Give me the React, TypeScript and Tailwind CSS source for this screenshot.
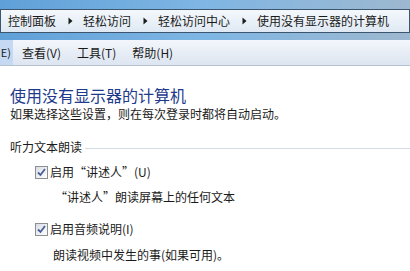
import React from 'react';

const font = { fontFamily: '"Noto Sans CJK SC", "Noto Sans", sans-serif' };

const Arrow = () => (
  <svg width="5" height="8" viewBox="0 0 5 8" className="ml-[12px] mr-[10px] shrink-0">
    <path d="M0.5 0.5 L4.5 4 L0.5 7.5 Z" fill="#1b1b1b" />
  </svg>
);

const Check = () => (
  <span className="w-[13px] h-[13px] border border-[#8e8f8f] bg-gradient-to-br from-[#d8dde6] to-[#ffffff] flex items-center justify-center shrink-0">
    <svg width="9" height="9" viewBox="0 0 9 9">
      <path d="M1 4.5 L3.5 7 L8 1" fill="none" stroke="#4a5f97" strokeWidth="1.8" />
    </svg>
  </span>
);

export default function App() {
  const crumbs = ['控制面板', '轻松访问', '轻松访问中心', '使用没有显示器的计算机'];
  return (
    <div className="w-[410px] h-[271px] overflow-hidden bg-white text-[12px] text-[#1a1a1a]" style={font}>
      {/* title / address */}
      <div className="bg-gradient-to-r from-[#5fa0d8] via-[#7fb6e4] to-[#9db8cf] pt-[9px] pb-[7px]">
        <div className="h-[24px] border border-[#3d5670] bg-gradient-to-b from-[#f4f8fc] to-[#dfe9f3] flex items-center pl-[7px]">
          {crumbs.map((c, i) => (
            <React.Fragment key={c}>
              <span className="leading-none">{c}</span>
              {i < crumbs.length - 1 && <Arrow />}
            </React.Fragment>
          ))}
        </div>
      </div>

      {/* menu bar */}
      <div className="h-[26px] bg-gradient-to-b from-[#f3f6fb] to-[#dce5f1] border-b border-[#b6c2d2] flex items-stretch">
        <span className="w-[13px] bg-[#c5daf2] flex items-center justify-end pr-[2px] whitespace-nowrap text-[11px]">E)</span>
        <span className="ml-[9px] flex items-center">查看(V)</span>
        <span className="ml-[16px] flex items-center">工具(T)</span>
        <span className="ml-[16px] flex items-center">帮助(H)</span>
      </div>

      {/* content */}
      <div className="pl-[10px] pt-[19px]">
        <div className="text-[16px] leading-[20px] text-[#1e3a8c]">使用没有显示器的计算机</div>
        <div className="leading-[18px]">如果选择这些设置，则在每次登录时都将自动启动。</div>

        <div className="mt-[16px] flex items-center">
          <span className="leading-[16px]">听力文本朗读</span>
          <span className="flex-1 h-px bg-[#d5dbe3] ml-[3px] mt-[3px]" />
        </div>

        <div className="pl-[25px] mt-[9px] flex items-center gap-[2px]">
          <Check />
          <span className="leading-[16px]">启用“讲述人”(U)</span>
        </div>
        <div className="pl-[45px] mt-[9px] leading-[16px]">“讲述人”朗读屏幕上的任何文本</div>

        <div className="pl-[25px] mt-[16px] flex items-center gap-[2px]">
          <Check />
          <span className="leading-[16px]">启用音频说明(I)</span>
        </div>
        <div className="pl-[43px] mt-[10px] leading-[16px]">朗读视频中发生的事(如果可用)。</div>
      </div>
    </div>
  );
}
